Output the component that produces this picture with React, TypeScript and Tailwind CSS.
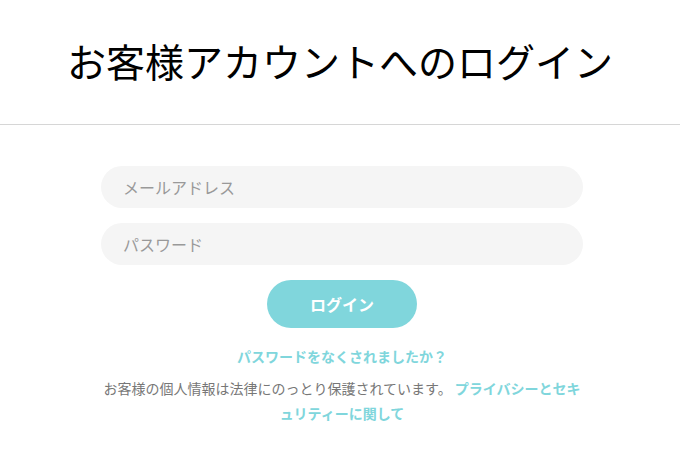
export default function App() {
  const font = { fontFamily: '"Noto Sans CJK JP", "Noto Sans", sans-serif' };
  return (
    <div className="min-h-[475px] w-full bg-white" style={font}>
      <div className="flex h-[125px] items-center justify-center border-b border-[#d6d6d6]">
        <h1 className="text-[39px] font-normal leading-none text-black pb-[3px]">お客様アカウントへのログイン</h1>
      </div>
      <div className="pl-[4px]">
        <div className="mx-auto flex w-[482px] flex-col items-center pt-[41px]">
          <input
            className="h-[42px] w-full rounded-full bg-[#f5f5f5] px-[22px] text-[16px] text-[#333] outline-none placeholder:text-[#999]"
            placeholder="メールアドレス"
          />
          <input
            type="password"
            className="mt-[15px] h-[42px] w-full rounded-full bg-[#f5f5f5] px-[22px] text-[16px] text-[#333] outline-none placeholder:text-[#999]"
            placeholder="パスワード"
          />
          <button className="mt-[15px] h-[48px] w-[150px] rounded-full bg-[#80d6dc] text-[16px] font-bold text-white">
            ログイン
          </button>
          <a className="mt-[16px] text-[14px] font-bold leading-[24px] text-[#80d6dc]">パスワードをなくされましたか？</a>
          <p className="mt-[8px] w-full text-center text-[14px] leading-[25px] text-[#777] [line-break:loose]">
            お客様の個人情報は法律にのっとり保護されています。 <a className="font-bold text-[#80d6dc]">プライバシーとセキュリティーに関して</a>
          </p>
        </div>
      </div>
    </div>
  );
}
